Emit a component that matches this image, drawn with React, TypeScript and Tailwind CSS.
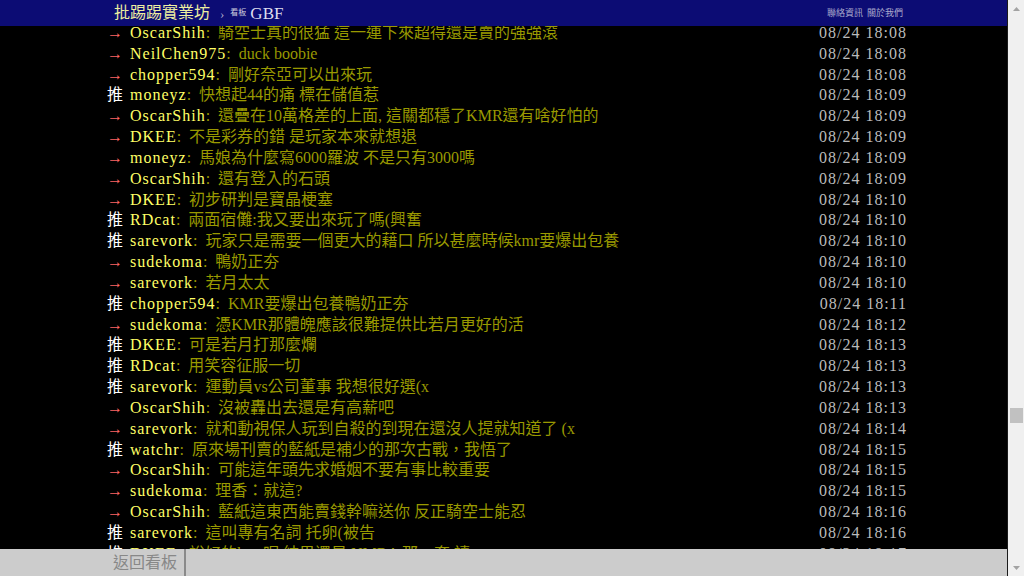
import React from "react"

type Push = { tag: "推" | "→"; user: string; text: string; time: string }

const pushes: Push[] = [
  { tag: "→", user: "OscarShih", text: "騎空士真的很猛 這一連下來超得還是賣的強強滾", time: "08/24 18:08" },
  { tag: "→", user: "NeilChen975", text: "duck boobie", time: "08/24 18:08" },
  { tag: "→", user: "chopper594", text: "剛好奈亞可以出來玩", time: "08/24 18:08" },
  { tag: "推", user: "moneyz", text: "快想起44的痛 標在儲值惹", time: "08/24 18:09" },
  { tag: "→", user: "OscarShih", text: "還疊在10萬格差的上面, 這關都穩了KMR還有啥好怕的", time: "08/24 18:09" },
  { tag: "→", user: "DKEE", text: "不是彩券的錯 是玩家本來就想退", time: "08/24 18:09" },
  { tag: "→", user: "moneyz", text: "馬娘為什麼寫6000羅波 不是只有3000嗎", time: "08/24 18:09" },
  { tag: "→", user: "OscarShih", text: "還有登入的石頭", time: "08/24 18:09" },
  { tag: "→", user: "DKEE", text: "初步研判是寶晶梗塞", time: "08/24 18:10" },
  { tag: "推", user: "RDcat", text: "兩面宿儺:我又要出來玩了嗎(興奮", time: "08/24 18:10" },
  { tag: "推", user: "sarevork", text: "玩家只是需要一個更大的藉口 所以甚麼時候kmr要爆出包養", time: "08/24 18:10" },
  { tag: "→", user: "sudekoma", text: "鴨奶正夯", time: "08/24 18:10" },
  { tag: "→", user: "sarevork", text: "若月太太", time: "08/24 18:10" },
  { tag: "推", user: "chopper594", text: "KMR要爆出包養鴨奶正夯", time: "08/24 18:11" },
  { tag: "→", user: "sudekoma", text: "憑KMR那體魄應該很難提供比若月更好的活", time: "08/24 18:12" },
  { tag: "推", user: "DKEE", text: "可是若月打那麼爛", time: "08/24 18:13" },
  { tag: "推", user: "RDcat", text: "用笑容征服一切", time: "08/24 18:13" },
  { tag: "推", user: "sarevork", text: "運動員vs公司董事 我想很好選(x", time: "08/24 18:13" },
  { tag: "→", user: "OscarShih", text: "沒被轟出去還是有高薪吧", time: "08/24 18:13" },
  { tag: "→", user: "sarevork", text: "就和動視保人玩到自殺的到現在還沒人提就知道了 (x", time: "08/24 18:14" },
  { tag: "推", user: "watchr", text: "原來場刊賣的藍紙是補少的那次古戰，我悟了", time: "08/24 18:15" },
  { tag: "→", user: "OscarShih", text: "可能這年頭先求婚姻不要有事比較重要", time: "08/24 18:15" },
  { tag: "→", user: "sudekoma", text: "理香：就這?", time: "08/24 18:15" },
  { tag: "→", user: "OscarShih", text: "藍紙這東西能賣錢幹嘛送你 反正騎空士能忍", time: "08/24 18:16" },
  { tag: "推", user: "sarevork", text: "這叫專有名詞 托卵(被告", time: "08/24 18:16" },
  { tag: "推", user: "DKEE", text: "說好的kmr呢 結果還是 NMRA 那一套 讀", time: "08/24 18:17" },
]

const PushRow = ({ p }: { p: Push }) => (
  <div className="flex h-[20.83px] items-center leading-[20.83px] whitespace-nowrap">
    <span className={`w-[23px] shrink-0 ${p.tag === "推" ? "text-white" : "text-[#ff6666]"}`}>{p.tag}</span>
    <span className="shrink-0 tracking-[1px] text-[#ffff66]">{p.user}</span>
    <span className="text-[#999900]">:&nbsp;&nbsp;{p.text}</span>
    <span className="ml-auto tracking-[1px] text-[#bbbbbb]">{p.time}</span>
  </div>
)

const Arrow = ({ down }: { down?: boolean }) => (
  <svg width="7" height="4" viewBox="0 0 7 4" className={down ? "rotate-180" : ""}>
    <polygon points="3.5,0 7,4 0,4" fill="#a3a3a3" />
  </svg>
)

export default function App() {
  return (
    <div
      className="flex h-[576px] w-[1024px] overflow-hidden bg-black"
      style={{ fontFamily: '"Liberation Serif", "Noto Sans CJK TC", serif' }}
    >
      <div className="relative flex-1 overflow-hidden">
        <div className="relative z-10 flex h-[26px] items-center bg-[#0c0c74] pl-[114px] pr-[104px] leading-none">
          <span className="text-[16px] text-[#eeeea0]">批踢踢實業坊</span>
          <span className="ml-[10px] text-[13px] text-[#aaaacc]">›</span>
          <span className="ml-[6px] text-[8px] text-[#ccccdd]">看板</span>
          <span className="ml-[4px] text-[17px] text-[#ddddee]">GBF</span>
          <span className="ml-auto text-[9px] text-[#aaaacc]">聯絡資訊</span>
          <span className="ml-[4px] text-[9px] text-[#aaaacc]">關於我們</span>
        </div>

        <div className="-mt-[3px] ml-[107px] w-[800px] text-[16px]">
          {pushes.map((p, i) => (
            <PushRow key={i} p={p} />
          ))}
        </div>

        <div className="absolute bottom-0 left-0 right-0 z-10 flex h-[27px] items-stretch bg-[#cccccc]">
          <div className="flex items-center border-r-2 border-[#8a8a8a] pl-[113px] pr-[7px] text-[16px] text-[#888888]">
            返回看板
          </div>
        </div>
      </div>

      <div className="flex w-[17px] flex-col items-center border-l border-[#1a1a1a] bg-[#f0f0f0]">
        <div className="flex h-[17px] items-center justify-center">
          <Arrow />
        </div>
        <div className="flex-1">
          <div className="mt-[391px] h-[15px] w-[13px] bg-[#c1c1c1]" />
        </div>
        <div className="flex h-[17px] items-center justify-center">
          <Arrow down />
        </div>
      </div>
    </div>
  )
}
